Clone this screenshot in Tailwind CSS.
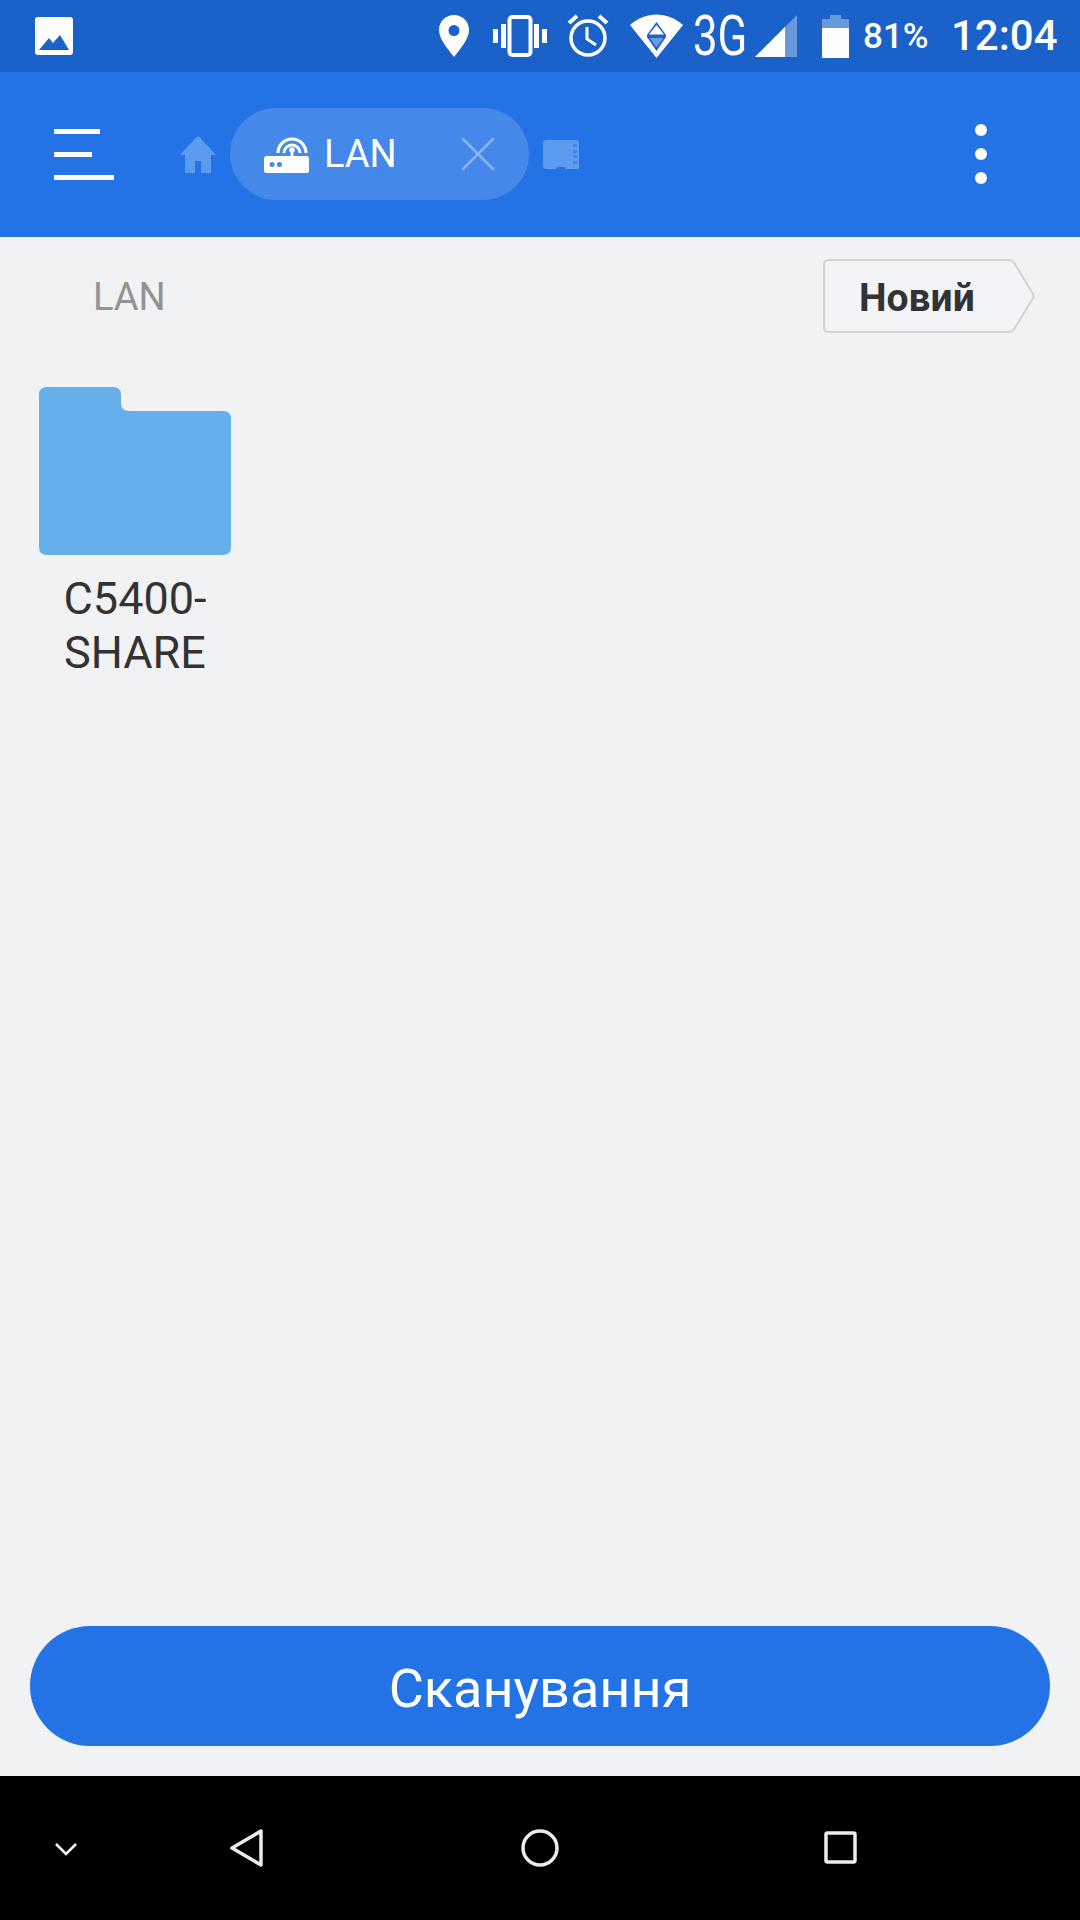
<!DOCTYPE html>
<html lang="uk">
<head>
    <meta charset="UTF-8" />
    <title>LAN</title>
    <script src="https://cdn.jsdelivr.net/npm/@tailwindcss/browser@4"></script>
</head>
<body class="bg-[#f0f2f4] font-['Roboto',sans-serif]">
<div class="w-[1080px] h-[1920px] flex flex-col overflow-hidden">

    <!-- status bar -->
    <div class="h-[72px] shrink-0 bg-[#1a61c9] flex items-center text-white">
        <svg class="ml-[35px] w-[38px] h-[38px]" viewBox="0 0 38 38">
            <rect width="38" height="38" rx="3" fill="#fff"/>
            <path d="M4 33 L14 21 L18 26 L25 18 L34 33 Z" fill="#1a61c9"/>
        </svg>

        <svg class="ml-[366px] w-[30px] h-[42px]" viewBox="0 0 30 42">
            <path fill-rule="evenodd" d="M15 0C6.700 0 0 6.500 0 15c0 9 9 19 15 27 6-8 15-18 15-27C30 6.500 23.300 0 15 0zm0 10a5.500 5.500 0 1 1 0 11 5.500 5.500 0 0 1 0-11z" fill="#fff"/>
        </svg>
        <svg class="ml-[24px] w-[54px] h-[42px]" viewBox="0 0 54 42">
            <rect x="0" y="14" width="5" height="14" fill="#fff"/>
            <rect x="8" y="9" width="5" height="24" fill="#fff"/>
            <rect x="41" y="9" width="5" height="24" fill="#fff"/>
            <rect x="49" y="14" width="5" height="14" fill="#fff"/>
            <rect x="16.500" y="2" width="21" height="38" rx="3" fill="none" stroke="#fff" stroke-width="4"/>
        </svg>
        <svg class="ml-[20px] w-[42px] h-[44px]" viewBox="0 0 42 44">
            <circle cx="21" cy="24" r="17" fill="none" stroke="#fff" stroke-width="3.500"/>
            <path d="M20 13v12l9 6" fill="none" stroke="#fff" stroke-width="3"/>
            <path d="M2 9l8-7M40 9l-8-7" stroke="#fff" stroke-width="4"/>
        </svg>
        <svg class="ml-[21px] w-[53px] h-[44px]" viewBox="0 0 53 44">
            <path d="M0 11C16 -3 37 -3 53 11L26.500 44Z" fill="#fff"/>
            <path d="M26.500 8 L36 21 L36 23 L26.500 37 L17 23 L17 21 Z" fill="#1a61c9"/>
            <path d="M26.500 11 L34 20.500 H19 Z" fill="#fff"/>
            <path d="M19.500 24 H33.500 L26.500 33.500 Z" fill="#6b9adf"/>
        </svg>
        <span class="ml-[10px] w-[54px] text-[56px] leading-none font-normal origin-left scale-x-[0.78] whitespace-nowrap">3G</span>
        <svg class="ml-[8px] w-[42px] h-[42px]" viewBox="0 0 42 42">
            <path d="M0 42 L42 0 V42 Z" fill="#fff" fill-opacity="0.35"/>
            <path d="M0 42 L30 12 V42 Z" fill="#fff"/>
        </svg>
        <svg class="ml-[25px] w-[27px] h-[43px]" viewBox="0 0 27 43">
            <path d="M8 0h11v4h8v39H0V4h8z" fill="#fff" fill-opacity="0.35"/>
            <rect y="13" width="27" height="30" fill="#fff"/>
        </svg>
        <span class="ml-[14px] text-[35px] leading-none font-medium w-[64px] whitespace-nowrap">81%</span>
        <span class="ml-[24px] text-[42px] leading-none font-medium">12:04</span>
    </div>

    <!-- app bar -->
    <div class="h-[165px] shrink-0 bg-[#2373e6] flex items-center">
        <div class="ml-[54px] w-[60px] flex flex-col gap-[18px]">
            <div class="h-[5px] w-[46px] bg-white"></div>
            <div class="h-[5px] w-[38px] bg-white"></div>
            <div class="h-[5px] w-[60px] bg-white"></div>
        </div>
        <svg class="ml-[66px] w-[36px] h-[37px]" viewBox="0 0 36 37">
            <path d="M16.500 1 Q18 -0.500 19.500 1 L36 19 H31 V37 H21 V25 H15 V37 H5 V19 H0 Z" fill="#5c9cf0"/>
        </svg>
        <div class="ml-[14px] w-[299px] h-[92px] mb-[1px] rounded-full bg-[#4488ea] flex items-center">
            <svg class="ml-[34px] w-[45px] h-[37px]" viewBox="0 0 45 37">
                <path d="M14 17a14 14 0 0 1 28 0" fill="none" stroke="#fff" stroke-width="3.200"/>
                <path d="M20 17a8 8 0 0 1 16 0" fill="none" stroke="#fff" stroke-width="3"/>
                <circle cx="28" cy="14" r="2.800" fill="#fff"/>
                <rect x="26.600" y="14" width="2.800" height="8" fill="#fff"/>
                <rect y="20" width="45" height="17" rx="2.500" fill="#fff"/>
                <circle cx="8" cy="28.500" r="2.500" fill="#4488ea"/>
                <circle cx="15.500" cy="28.500" r="2.500" fill="#4488ea"/>
            </svg>
            <span class="ml-[15px] w-[72px] text-white text-[38px] leading-none">LAN</span>
            <svg class="ml-[65px] w-[34px] h-[34px]" viewBox="0 0 34 34">
                <path d="M2 2L32 32M32 2L2 32" stroke="#8ab5f2" stroke-width="2.500" stroke-linecap="round"/>
            </svg>
        </div>
        <svg class="ml-[14px] w-[36px] h-[29px]" viewBox="0 0 36 29">
            <path d="M3 0H33A3 3 0 0 1 36 3V29H22V27H15L12 29H3A3 3 0 0 1 0 26V3A3 3 0 0 1 3 0Z" fill="#5c9cf0"/>
            <path d="M30 4h4v3h-4zM30 10h4v3h-4zM30 15h4v3h-4zM30 21h4v3h-4z" fill="#3f86ea"/>
        </svg>
        <div class="ml-[396px] flex flex-col gap-[12px] mb-[1px]">
            <div class="w-[12px] h-[12px] rounded-full bg-white"></div>
            <div class="w-[12px] h-[12px] rounded-full bg-white"></div>
            <div class="w-[12px] h-[12px] rounded-full bg-white"></div>
        </div>
    </div>

    <!-- breadcrumb row -->
    <div class="flex items-center justify-between pt-[22px] pl-[93px] pr-[45px]">
        <span class="text-[38px] leading-none text-[#939393] pt-[1px]">LAN</span>
        <div class="relative w-[212px] h-[74px] flex items-center pl-[36px]">
            <svg class="absolute inset-0" width="212" height="74" viewBox="0 0 212 74">
                <path d="M6 1H186Q189 1 191 3.500L210 35Q211 37 210 39L191 70.500Q189 73 186 73H6Q1 73 1 68V6Q1 1 6 1Z" fill="#f3f4f7" stroke="#d2d2d2" stroke-width="2"/>
            </svg>
            <span class="relative text-[39px] leading-none font-bold text-[#333333] pt-[5px]">Новий</span>
        </div>
    </div>

    <!-- files -->
    <div class="pl-[39px] pt-[54px] w-[192px] box-content">
        <svg class="w-[192px] h-[168px]" viewBox="0 0 192 168">
            <path d="M8 0H74Q82 0 82 8V16Q82 24 90 24H184Q192 24 192 32V160Q192 168 184 168H8Q0 168 0 160V8Q0 0 8 0Z" fill="#65b0ea"/>
        </svg>
        <p class="mt-[17px] text-center text-[45px] leading-[54px] text-[#333333]">C5400-<br>SHARE</p>
    </div>

    <!-- scan button -->
    <button class="mt-auto mb-[30px] mx-[30px] h-[120px] shrink-0 rounded-full bg-[#2373e6] text-white text-[54px] leading-none pt-[6px]">Сканування</button>

    <!-- nav bar -->
    <div class="h-[144px] shrink-0 bg-black relative">
        <svg class="absolute left-[54px] top-[66px] w-[24px] h-[14px]" viewBox="0 0 24 14">
            <path d="M2 2L12 12L22 2" fill="none" stroke="#fff" stroke-width="2.500"/>
        </svg>
        <svg class="absolute left-[229px] top-[53px] w-[34px] h-[38px]" viewBox="0 0 34 38">
            <path d="M32 2V36L3 19Z" fill="none" stroke="#ececec" stroke-width="3.500" stroke-linejoin="round"/>
        </svg>
        <svg class="absolute left-[521px] top-[53px] w-[38px] h-[38px]" viewBox="0 0 38 38">
            <circle cx="19" cy="19" r="17" fill="none" stroke="#ececec" stroke-width="3.500"/>
        </svg>
        <svg class="absolute left-[824px] top-[55px] w-[33px] h-[33px]" viewBox="0 0 33 33">
            <rect x="2" y="2" width="29" height="29" rx="1.500" fill="none" stroke="#ececec" stroke-width="3.500"/>
        </svg>
    </div>
</div>
</body>
</html>
